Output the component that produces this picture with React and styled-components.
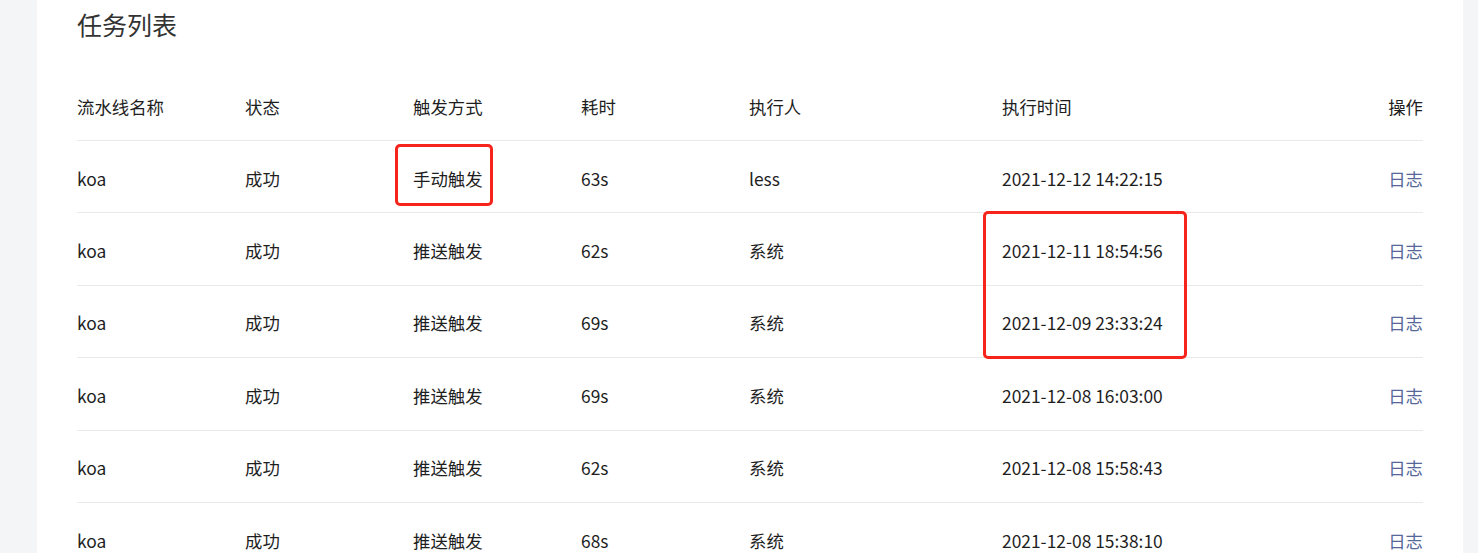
import React from "react";
import styled, { createGlobalStyle } from "styled-components";

const Global = createGlobalStyle`
  html, body { margin: 0; padding: 0; background: #f4f5f7; overflow: hidden; }
  body { font-family: "Noto Sans CJK SC", "Noto Sans", sans-serif; }
`;

const Page = styled.div`
  display: flex;
  padding: 0 15px 0 37px;
  height: 553px;
  box-sizing: border-box;
`;

const Card = styled.section`
  position: relative;
  flex: 1;
  background: #ffffff;
  padding: 0 40px;
  min-height: 100%;
`;

const Title = styled.h2`
  margin: 0;
  height: 50px;
  line-height: 48px;
  font-size: 25px;
  font-weight: 400;
  color: #333;
`;

const Table = styled.div`
  margin-top: 20px;
  display: flex;
  flex-direction: column;
`;

const Row = styled.div`
  display: grid;
  grid-template-columns: 168px 168px 168px 168px 253px 1fr auto;
  align-items: center;
  box-sizing: border-box;
  height: ${(p) => (p.$head ? "71px" : "72.4px")};
  border-bottom: 1px solid #e9e9e9;
  font-size: 17.4px;
  color: #1e1e1e;
`;

const Cell = styled.div`
  white-space: nowrap;
  text-align: ${(p) => (p.$right ? "right" : "left")};
  padding-top: ${(p) => (p.$head ? "2px" : "3px")};
`;

const LogLink = styled.a`
  color: #56689a;
  text-decoration: none;
  cursor: pointer;
`;

const Mark = styled.div`
  position: absolute;
  border: 3px solid #f7241b;
  border-radius: 5px;
  box-sizing: border-box;
  pointer-events: none;
`;

const rows = [
  ["koa", "成功", "手动触发", "63s", "less", "2021-12-12 14:22:15"],
  ["koa", "成功", "推送触发", "62s", "系统", "2021-12-11 18:54:56"],
  ["koa", "成功", "推送触发", "69s", "系统", "2021-12-09 23:33:24"],
  ["koa", "成功", "推送触发", "69s", "系统", "2021-12-08 16:03:00"],
  ["koa", "成功", "推送触发", "62s", "系统", "2021-12-08 15:58:43"],
  ["koa", "成功", "推送触发", "68s", "系统", "2021-12-08 15:38:10"],
];

const heads = ["流水线名称", "状态", "触发方式", "耗时", "执行人", "执行时间"];

export default function App() {
  return (
    <>
      <Global />
      <Page>
        <Card>
          <Title>任务列表</Title>
          <Table>
            <Row $head>
              {heads.map((h) => (
                <Cell key={h} $head>{h}</Cell>
              ))}
              <Cell $head $right>操作</Cell>
            </Row>
            {rows.map((r, i) => (
              <Row key={i}>
                {r.map((c, j) => (
                  <Cell key={j}>{c}</Cell>
                ))}
                <Cell $right>
                  <LogLink>日志</LogLink>
                </Cell>
              </Row>
            ))}
          </Table>
          <Mark style={{ left: 358, top: 144, width: 98, height: 62 }} />
          <Mark style={{ left: 946, top: 211, width: 204, height: 148 }} />
        </Card>
      </Page>
    </>
  );
}
